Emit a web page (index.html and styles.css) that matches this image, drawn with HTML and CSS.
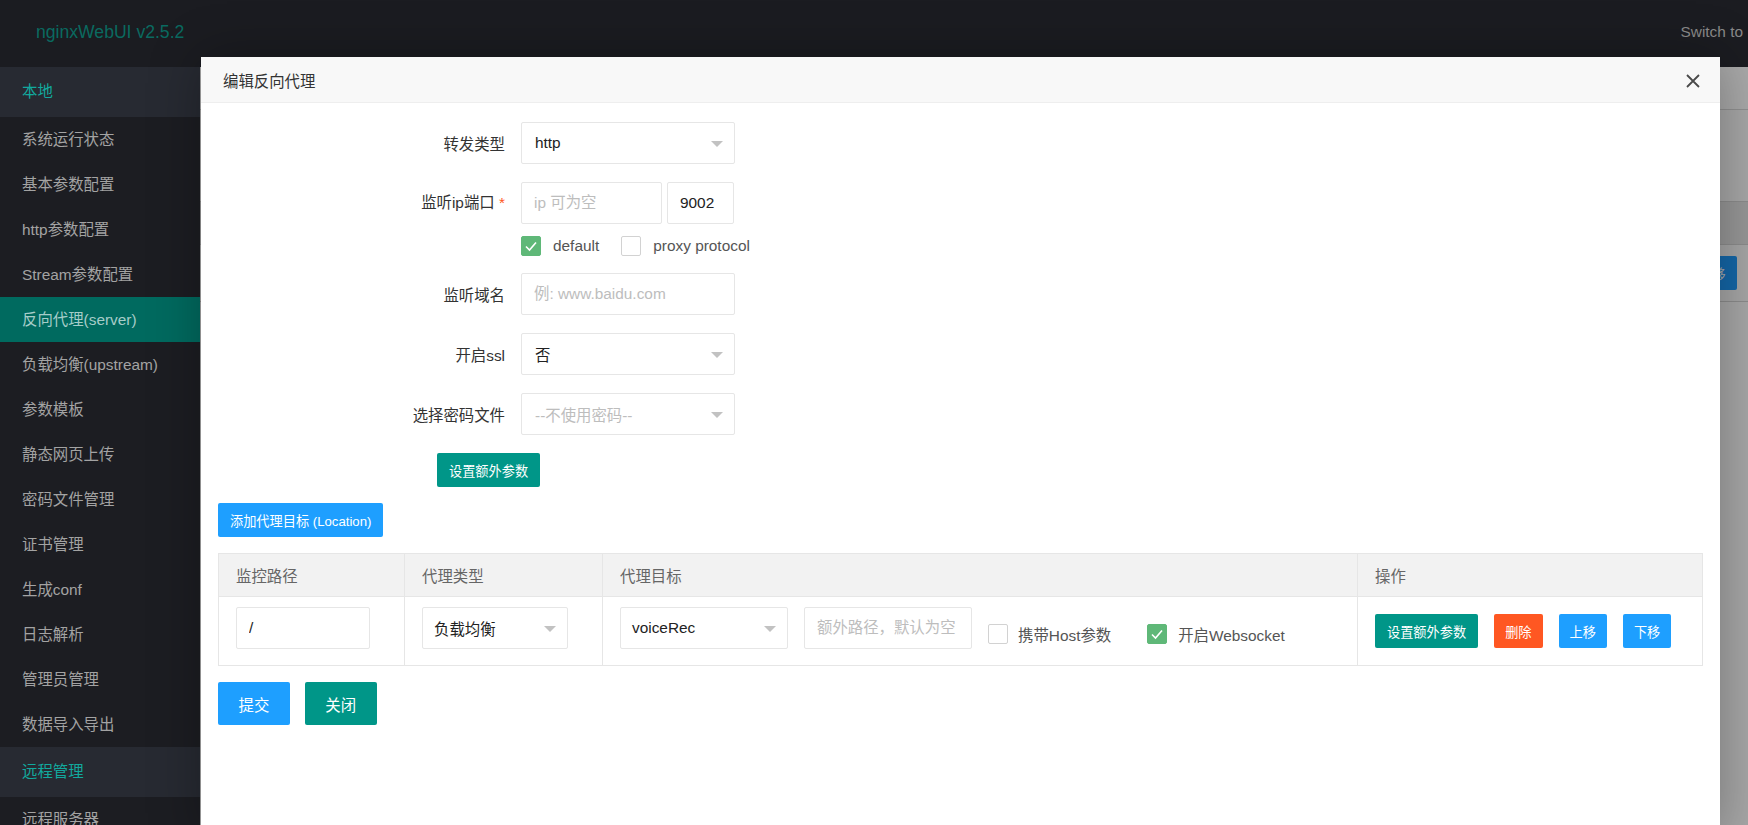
FILE: index.html
```html
<!DOCTYPE html>
<html lang="zh-CN">
<head>
<meta charset="utf-8">
<title>nginxWebUI</title>
<link rel="stylesheet" href="styles.css">
</head>
<body>
<div class="app">
  <header class="topbar">
    <div class="logo">nginxWebUI v2.5.2</div>
    <div class="switch">Switch to</div>
  </header>
  <div class="layout">
    <nav class="side">
      <div class="nav-head">本地</div>
      <div class="nav-item">系统运行状态</div>
      <div class="nav-item">基本参数配置</div>
      <div class="nav-item">http参数配置</div>
      <div class="nav-item">Stream参数配置</div>
      <div class="nav-item active">反向代理(server)</div>
      <div class="nav-item">负载均衡(upstream)</div>
      <div class="nav-item">参数模板</div>
      <div class="nav-item">静态网页上传</div>
      <div class="nav-item">密码文件管理</div>
      <div class="nav-item">证书管理</div>
      <div class="nav-item">生成conf</div>
      <div class="nav-item">日志解析</div>
      <div class="nav-item">管理员管理</div>
      <div class="nav-item">数据导入导出</div>
      <div class="nav-head">远程管理</div>
      <div class="nav-item">远程服务器</div>
    </nav>
    <main class="main">
      <div class="main-tabs"></div>
      <div class="main-gap"></div>
      <div class="main-thead"></div>
      <div class="main-row"><span class="main-btn">下移</span></div>
    </main>
  </div>
</div>

<div class="layer">
  <div class="layer-title">
    <span>编辑反向代理</span>
    <svg class="layer-close" width="14" height="14" viewBox="0 0 14 14"><path d="M1 1 L13 13 M13 1 L1 13" stroke="#4a4a4a" stroke-width="1.8" fill="none"/></svg>
  </div>
  <div class="layer-body">
    <div class="form-item">
      <label class="form-label">转发类型</label>
      <div class="select"><span class="sel-text">http</span><i class="edge"></i></div>
    </div>
    <div class="form-item multi">
      <label class="form-label">监听ip端口 <span class="req">*</span></label>
      <div class="input-block">
        <div class="input-line">
          <input class="input ip" type="text" placeholder="ip 可为空">
          <input class="input port" type="text" value="9002">
        </div>
        <div class="check-line">
          <span class="cb"><span class="box checked"><svg width="20" height="20" viewBox="0 0 20 20"><polyline points="5,10.5 8.5,14 15,6.5" stroke="#fff" stroke-width="1.6" fill="none"/></svg></span><span class="cb-text">default</span></span>
          <span class="cb cb-second"><span class="box"></span><span class="cb-text">proxy protocol</span></span>
        </div>
      </div>
    </div>
    <div class="form-item">
      <label class="form-label">监听域名</label>
      <input class="input wide" type="text" placeholder="例: www.baidu.com">
    </div>
    <div class="form-item">
      <label class="form-label">开启ssl</label>
      <div class="select"><span class="sel-text">否</span><i class="edge"></i></div>
    </div>
    <div class="form-item">
      <label class="form-label">选择密码文件</label>
      <div class="select"><span class="sel-text muted">--不使用密码--</span><i class="edge"></i></div>
    </div>
    <div class="extra-line"><span class="btn btn-sm btn-teal btn-wide">设置额外参数</span></div>
    <div class="add-line"><span class="btn btn-sm btn-blue btn-wide">添加代理目标 (Location)</span></div>

    <table class="loc-table">
      <colgroup>
        <col class="c1"><col class="c2"><col class="c3"><col class="c4">
      </colgroup>
      <thead>
        <tr><th>监控路径</th><th>代理类型</th><th>代理目标</th><th>操作</th></tr>
      </thead>
      <tbody>
        <tr>
          <td><input class="input path" type="text" value="/"></td>
          <td><div class="select lb"><span class="sel-text">负载均衡</span><i class="edge"></i></div></td>
          <td>
            <div class="target">
              <div class="select tgt"><span class="sel-text">voiceRec</span><i class="edge"></i></div>
              <input class="input extra" type="text" placeholder="额外路径，默认为空">
              <span class="cb cb-row"><span class="box"></span><span class="cb-text">携带Host参数</span></span>
              <span class="cb cb-row ws"><span class="box checked"><svg width="20" height="20" viewBox="0 0 20 20"><polyline points="5,10.5 8.5,14 15,6.5" stroke="#fff" stroke-width="1.6" fill="none"/></svg></span><span class="cb-text">开启Websocket</span></span>
            </div>
          </td>
          <td>
            <div class="ops">
              <span class="btn btn-sm btn-teal btn-wide">设置额外参数</span>
              <span class="btn btn-sm btn-orange">删除</span>
              <span class="btn btn-sm btn-blue">上移</span>
              <span class="btn btn-sm btn-blue">下移</span>
            </div>
          </td>
        </tr>
      </tbody>
    </table>

    <div class="submit-line">
      <span class="btn btn-blue">提交</span>
      <span class="btn btn-teal">关闭</span>
    </div>
  </div>
</div>
</body>
</html>
```

FILE: styles.css
```css
html, body {
  margin: 0;
  padding: 0;
  width: 1748px;
  height: 825px;
  overflow: hidden;
  font-family: "Liberation Sans", Arial, "Noto Sans CJK SC", sans-serif;
  font-size: 15.4px;
  color: #333;
  background: #1c1d22;
}

.app {
  width: 1748px;
  height: 825px;
  display: flex;
  flex-direction: column;
}

/* top bar */
.topbar {
  height: 67px;
  flex: none;
  background: #1b1c21;
  display: flex;
  align-items: center;
  padding-bottom: 3px;
  box-sizing: border-box;
}
.logo {
  flex: 1;
  padding-left: 36px;
  font-size: 17.6px;
  color: #0a6a60;
}
.switch {
  margin-right: 5px;
  white-space: nowrap;
  color: #8a8a8a;
  font-size: 15.4px;
}

.layout {
  flex: 1;
  display: flex;
  min-height: 0;
}

/* sidebar */
.side {
  width: 200px;
  flex: none;
  background: #1c1d22;
}
.nav-head {
  height: 50px;
  line-height: 50px;
  padding-left: 22px;
  background: #272a32;
  color: #12a99e;
}
.nav-item {
  height: 45px;
  line-height: 45px;
  padding-left: 22px;
  color: #a3a3a3;
  white-space: nowrap;
}
.nav-item.active {
  background: #006a5f;
  color: #a6cdc9;
}

/* dimmed main page */
.main {
  flex: 1;
  background: #a7a7a7;
  display: flex;
  flex-direction: column;
}
.main-tabs {
  height: 42px;
  background: #a9a9a9;
  border-bottom: 1px solid #909090;
}
.main-gap {
  height: 91px;
}
.main-thead {
  height: 42px;
  background: #979797;
  border-top: 1px solid #8c8c8c;
  border-bottom: 1px solid #8c8c8c;
}
.main-row {
  height: 56px;
  border-bottom: 1px solid #8c8c8c;
  background: #a6a6a6;
  display: flex;
  align-items: center;
  justify-content: flex-end;
  padding-right: 11px;
}
.main-btn {
  height: 34px;
  width: 49px;
  background: #1467a8;
  color: #a9a9a9;
  font-size: 13.2px;
  border-radius: 2px;
  display: flex;
  align-items: center;
  justify-content: center;
}

/* modal layer */
.layer {
  position: absolute;
  left: 201px;
  top: 57px;
  width: 1519px;
  height: 780px;
  background: #fff;
  box-shadow: 1px 1px 50px rgba(0, 0, 0, .3);
}
.layer-title {
  height: 46px;
  border-bottom: 1px solid #eee;
  box-sizing: border-box;
  background: #f8f8f8;
  display: flex;
  align-items: center;
  padding-left: 22px;
  padding-right: 20px;
  font-size: 15.4px;
  color: #333;
}
.layer-title span {
  flex: 1;
}
.layer-close {
  margin-top: 3px;
}
.layer-body {
  padding: 19px 17px 0 17px;
}

/* form */
.form-item {
  display: flex;
  align-items: center;
  height: 42px;
  margin-bottom: 18px;
}
.form-item.multi {
  height: auto;
  align-items: flex-start;
  margin-bottom: 17px;
}
.form-item.multi .form-label {
  height: 42px;
  line-height: 42px;
}
.form-label {
  width: 303px;
  flex: none;
  box-sizing: border-box;
  padding-right: 16px;
  text-align: right;
  color: #333;
  white-space: nowrap;
}
.req {
  color: #ff5722;
}
.input-block {
  display: flex;
  flex-direction: column;
}
.input-line {
  display: flex;
  gap: 5px;
}
.check-line {
  display: flex;
  margin-top: 12px;
  height: 20px;
  align-items: center;
}

.select {
  width: 214px;
  height: 42px;
  box-sizing: border-box;
  border: 1px solid #e6e6e6;
  border-radius: 2px;
  background: #fff;
  display: flex;
  align-items: center;
  padding-left: 13px;
  padding-right: 11px;
}
.sel-text {
  flex: 1;
  color: #222;
  white-space: nowrap;
}
.sel-text.muted {
  color: #bdbdbd;
}
.edge {
  width: 0;
  height: 0;
  border-left: 6.6px solid transparent;
  border-right: 6.6px solid transparent;
  border-top: 6.6px solid #c2c2c2;
  margin-top: 2px;
}

.input {
  height: 42px;
  box-sizing: border-box;
  border: 1px solid #e6e6e6;
  border-radius: 2px;
  padding: 0 12px;
  font-family: "Liberation Sans", Arial, "Noto Sans CJK SC", sans-serif;
  font-size: 15.4px;
  color: #222;
  outline: none;
  background: #fff;
}
.input::placeholder {
  color: #bdbdbd;
}
.input.ip { width: 141px; }
.input.port { width: 67px; padding-left: 12px; }
.input.wide { width: 214px; }

/* checkboxes */
.cb {
  display: inline-flex;
  align-items: center;
  height: 20px;
}
.box {
  width: 20px;
  height: 20px;
  box-sizing: border-box;
  border: 1px solid #d2d2d2;
  border-radius: 2px;
  background: #fff;
  display: inline-flex;
  flex: none;
}
.box.checked {
  background: #5fb878;
  border-color: #5fb878;
}
.box svg {
  margin: -1px;
}
.cb-text {
  margin-left: 12px;
  color: #555;
  white-space: nowrap;
}
.cb-second {
  margin-left: 22px;
}

/* buttons */
.btn {
  display: inline-flex;
  align-items: center;
  justify-content: center;
  height: 43px;
  padding: 0 20.5px;
  border-radius: 2px;
  color: #fff;
  font-size: 15.4px;
  white-space: nowrap;
  box-sizing: border-box;
}
.btn-sm {
  height: 34px;
  padding: 0 11px;
  font-size: 13.2px;
}
.btn-wide {
  padding: 0 12px;
}
.btn-teal { background: #009688; }
.btn-blue { background: #1e9fff; }
.btn-orange { background: #ff5722; }

.extra-line {
  display: flex;
  padding-left: 219px;
  margin-bottom: 16px;
}
.add-line {
  display: flex;
  margin-bottom: 16px;
}

/* location table */
.loc-table {
  width: 1484px;
  border-collapse: collapse;
  table-layout: fixed;
  border: 1px solid #e6e6e6;
}
.c1 { width: 186px; }
.c2 { width: 198px; }
.c3 { width: 755px; }
.c4 { width: 345px; }
.loc-table th {
  height: 42px;
  padding: 0 17px;
  background: #f2f2f2;
  color: #666;
  font-weight: normal;
  text-align: left;
  border: 1px solid #e6e6e6;
}
.loc-table td {
  height: 68px;
  padding: 0 17px;
  border: 1px solid #e6e6e6;
  vertical-align: middle;
}
.input.path {
  width: 134px;
  display: block;
  margin-bottom: 6px;
}
.select.lb {
  width: 146px;
  margin-bottom: 6px;
  padding-left: 11px;
}
.target {
  display: flex;
  align-items: center;
}
.select.tgt {
  width: 168px;
  margin-bottom: 6px;
  padding-left: 11px;
}
.input.extra {
  width: 168px;
  margin-left: 16px;
  margin-bottom: 6px;
}
.cb-row {
  margin-top: 6px;
  margin-left: 16px;
}
.cb-row .cb-text {
  margin-left: 10px;
}
.cb-row.ws {
  margin-left: 36px;
}
.cb-row.ws .cb-text {
  margin-left: 11px;
}
.ops {
  display: flex;
  gap: 16px;
  align-items: center;
}

.submit-line {
  display: flex;
  gap: 15px;
  margin-top: 16px;
}
```
